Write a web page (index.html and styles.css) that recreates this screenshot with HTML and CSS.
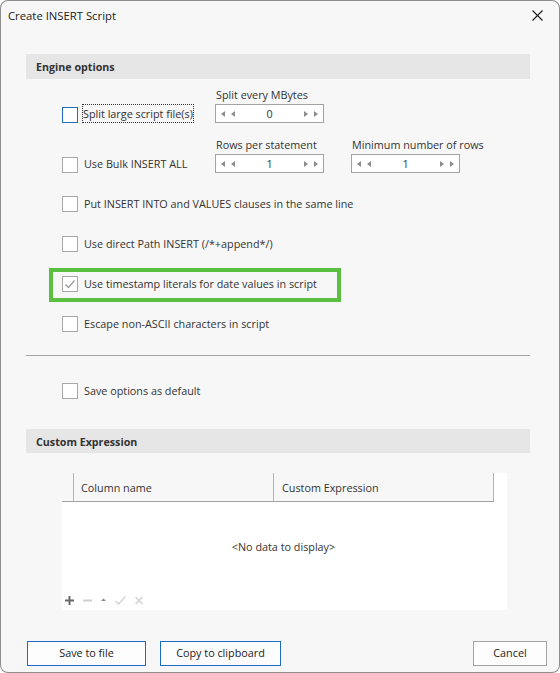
FILE: index.html
```html
<!DOCTYPE html>
<html lang="en">
<head>
    <meta charset="UTF-8">
    <meta name="viewport" content="width=device-width, initial-scale=1.0">
    <title>Create INSERT Script</title>
    <link rel="stylesheet" href="styles.css">
</head>
<body>
<div class="dialog">
    <div class="titlebar">
        <span class="title">Create INSERT Script</span>
        <span class="close">
            <svg width="11" height="11" viewBox="0 0 11 11"><path d="M0.5 0.5 L10.5 10.5 M10.5 0.5 L0.5 10.5" stroke="#1b1b1b" stroke-width="1.1" fill="none"/></svg>
        </span>
    </div>

    <div class="content">
        <div class="section-head">Engine options</div>

        <div class="options">
            <!-- Split large files -->
            <div class="opt spin-row">
                <div class="check-cell">
                    <span class="box focused"></span>
                    <span class="text focus-rect">Split large script file(s)</span>
                </div>
                <div class="spin-group">
                    <div class="spin-label">Split every MBytes</div>
                    <div class="spin">
                        <span class="arrows">
                            <svg width="4" height="6" viewBox="0 0 4 6"><polygon points="4,0 4,6 0,3" fill="#8c8c8c"/></svg>
                            <svg width="4" height="6" viewBox="0 0 4 6"><polygon points="4,0 4,6 0,3" fill="#8c8c8c"/></svg>
                        </span>
                        <span class="value">0</span>
                        <span class="arrows">
                            <svg width="4" height="6" viewBox="0 0 4 6"><polygon points="0,0 0,6 4,3" fill="#8c8c8c"/></svg>
                            <svg width="4" height="6" viewBox="0 0 4 6"><polygon points="0,0 0,6 4,3" fill="#8c8c8c"/></svg>
                        </span>
                    </div>
                </div>
            </div>

            <!-- Bulk insert -->
            <div class="opt spin-row second">
                <div class="check-cell">
                    <span class="box"></span>
                    <span class="text">Use Bulk INSERT ALL</span>
                </div>
                <div class="spin-group">
                    <div class="spin-label">Rows per statement</div>
                    <div class="spin">
                        <span class="arrows">
                            <svg width="4" height="6" viewBox="0 0 4 6"><polygon points="4,0 4,6 0,3" fill="#8c8c8c"/></svg>
                            <svg width="4" height="6" viewBox="0 0 4 6"><polygon points="4,0 4,6 0,3" fill="#8c8c8c"/></svg>
                        </span>
                        <span class="value">1</span>
                        <span class="arrows">
                            <svg width="4" height="6" viewBox="0 0 4 6"><polygon points="0,0 0,6 4,3" fill="#8c8c8c"/></svg>
                            <svg width="4" height="6" viewBox="0 0 4 6"><polygon points="0,0 0,6 4,3" fill="#8c8c8c"/></svg>
                        </span>
                    </div>
                </div>
                <div class="spin-group wide-gap">
                    <div class="spin-label">Minimum number of rows</div>
                    <div class="spin">
                        <span class="arrows">
                            <svg width="4" height="6" viewBox="0 0 4 6"><polygon points="4,0 4,6 0,3" fill="#8c8c8c"/></svg>
                            <svg width="4" height="6" viewBox="0 0 4 6"><polygon points="4,0 4,6 0,3" fill="#8c8c8c"/></svg>
                        </span>
                        <span class="value">1</span>
                        <span class="arrows">
                            <svg width="4" height="6" viewBox="0 0 4 6"><polygon points="0,0 0,6 4,3" fill="#8c8c8c"/></svg>
                            <svg width="4" height="6" viewBox="0 0 4 6"><polygon points="0,0 0,6 4,3" fill="#8c8c8c"/></svg>
                        </span>
                    </div>
                </div>
            </div>

            <div class="opt">
                <span class="box"></span>
                <span class="text">Put INSERT INTO and VALUES clauses in the same line</span>
            </div>
            <div class="opt">
                <span class="box"></span>
                <span class="text">Use direct Path INSERT (/*+append*/)</span>
            </div>
            <div class="opt highlighted">
                <span class="box checked">
                    <svg width="14" height="14" viewBox="0 0 14 14"><polyline points="2.5,7.5 5.5,10.5 11.5,3.5" fill="none" stroke="#9a9a9a" stroke-width="1.2"/></svg>
                </span>
                <span class="text">Use timestamp literals for date values in script</span>
            </div>
            <div class="opt">
                <span class="box"></span>
                <span class="text">Escape non-ASCII characters in script</span>
            </div>
        </div>

        <div class="separator"></div>

        <div class="options">
            <div class="opt">
                <span class="box"></span>
                <span class="text">Save options as default</span>
            </div>
        </div>

        <div class="section-head custom">Custom Expression</div>

        <div class="grid">
            <div class="grid-head">
                <div class="col indicator"></div>
                <div class="col first">Column name</div>
                <div class="col second">Custom Expression</div>
            </div>
            <div class="grid-body">
                <div class="empty">&lt;No data to display&gt;</div>
                <div class="navigator">
                    <svg width="9" height="9" viewBox="0 0 9 9"><path d="M4.5 0 V9 M0 4.5 H9" stroke="#6a6a6a" stroke-width="2"/></svg>
                    <svg width="9" height="9" viewBox="0 0 9 9"><path d="M0 4.5 H9" stroke="#cfcfcf" stroke-width="2"/></svg>
                    <svg width="5" height="9" viewBox="0 0 5 9"><polygon points="0,5 5,5 2.5,2.5" fill="#8a8a8a"/></svg>
                    <svg width="11" height="9" viewBox="0 0 11 9"><polyline points="0.5,5 3.5,8 10.5,0.5" fill="none" stroke="#d2d2d2" stroke-width="1.3"/></svg>
                    <svg width="8" height="9" viewBox="0 0 8 9"><path d="M0.5 1 L7.5 8 M7.5 1 L0.5 8" stroke="#d2d2d2" stroke-width="1.4"/></svg>
                </div>
            </div>
        </div>
    </div>

    <div class="footer">
        <button class="btn primary">Save to file</button>
        <button class="btn primary copy">Copy to clipboard</button>
        <button class="btn cancel">Cancel</button>
    </div>
</div>
</body>
</html>
```

FILE: styles.css
```css
body {
    margin: 0;
    padding: 0;
    background-color: #ffffff;
    font-family: "Open Sans", "Noto Sans", sans-serif;
    font-size: 10.8px;
    color: #333;
}

.dialog {
    width: 560px;
    height: 673px;
    box-sizing: border-box;
    background-color: #f7f7f7;
    border-radius: 8px;
    box-shadow: inset 0 0 0 1px #8d8d8d;
    overflow: hidden;
}

/* Title bar */
.titlebar {
    height: 30px;
    display: flex;
    align-items: center;
    padding: 0 17px 0 8px;
}

.title {
    font-size: 11.3px;
    color: #1b1b1b;
    flex: 1;
}

.close {
    display: flex;
    width: 11px;
    height: 11px;
}

/* Content */
.content {
    padding: 0 30px 0 26px;
}

.section-head {
    margin-top: 24px;
    height: 25px;
    box-sizing: border-box;
    padding-top: 1px;
    line-height: 25px;
    padding-left: 10px;
    background-color: #e6e6e6;
    font-weight: bold;
    font-size: 10.7px;
    color: #333;
}

.section-head.custom {
    margin-top: 18px;
    height: 24px;
    line-height: 24px;
}

.options {
    padding-left: 36px;
    padding-top: 7px;
}

.opt {
    display: flex;
    align-items: center;
    height: 40px;
    position: relative;
}

.opt .text {
    margin-top: -1px;
}

.spin-row {
    height: auto;
    align-items: flex-end;
}

.spin-row.second {
    margin-top: 13px;
    margin-bottom: 11px;
}

.check-cell {
    width: 153px;
    height: 19px;
    display: flex;
    align-items: center;
}

.box {
    width: 16px;
    height: 16px;
    box-sizing: border-box;
    border: 1px solid #a8a8a8;
    background-color: #fff;
    flex-shrink: 0;
    display: flex;
    align-items: center;
    justify-content: center;
}

.spin-row .box {
    margin-top: 2px;
}

.box.focused {
    border-color: #1f6fc5;
}

.text {
    margin-left: 6px;
    white-space: nowrap;
}

.focus-rect {
    margin-left: 5px;
    padding: 1px 0;
    outline: 1px dotted #333;
}

.highlighted::after {
    content: "";
    position: absolute;
    left: -13px;
    top: 4px;
    width: 292px;
    height: 34px;
    box-sizing: border-box;
    border: 4px solid #5cbf3f;
}

/* Spin editors */
.spin-group {
    width: 109px;
}

.spin-group.wide-gap {
    margin-left: 27px;
}

.spin-label {
    height: 18px;
    line-height: 17px;
    padding-left: 1px;
    white-space: nowrap;
}

.spin {
    height: 19px;
    box-sizing: border-box;
    border: 1px solid #a3a3a3;
    background-color: #fff;
    display: flex;
    align-items: center;
    padding: 0 5px;
}

.arrows {
    display: flex;
    gap: 6px;
}

.spin .value {
    flex: 1;
    text-align: center;
}

.separator {
    margin-top: 11px;
    border-top: 1px solid #a3a3a3;
}

.separator + .options {
    padding-top: 15px;
}

/* Grid */
.grid {
    margin: 20px 0 0 36px;
    width: 445px;
    height: 137px;
    background-color: #fff;
}

.grid-head {
    width: 432px;
    height: 28px;
    display: flex;
    background-color: #f7f7f7;
    border-bottom: 1px solid #a3a3a3;
}

.col {
    border-right: 1px solid #b4b4b4;
    line-height: 29px;
    white-space: nowrap;
}

.col.indicator {
    width: 11px;
}

.col.first {
    width: 192px;
    padding-left: 7px;
}

.col.second {
    flex: 1;
    padding-left: 8px;
}

.grid-body {
    height: 108px;
    display: flex;
    flex-direction: column;
}

.empty {
    height: 90px;
    padding-top: 37px;
    box-sizing: border-box;
    line-height: 16px;
    text-align: center;
    padding-right: 2px;
}

.navigator {
    display: flex;
    align-items: center;
    gap: 9px;
    height: 16px;
    padding-left: 3px;
}

/* Footer buttons */
.footer {
    display: flex;
    margin-top: 31px;
    padding: 0 13px 0 27px;
}

.btn {
    height: 25px;
    font-family: "Open Sans", "Noto Sans", sans-serif;
    font-size: 10.8px;
    color: #1b1b1b;
    background-color: #fdfdfd;
    border: 1px solid #a3a3a3;
    padding: 0 0 2px 0;
}

.btn.primary {
    width: 119px;
    border-color: #1a6cc4;
}

.btn.copy {
    width: 121px;
    margin-left: 14px;
}

.btn.cancel {
    width: 74px;
    margin-left: auto;
}
```
